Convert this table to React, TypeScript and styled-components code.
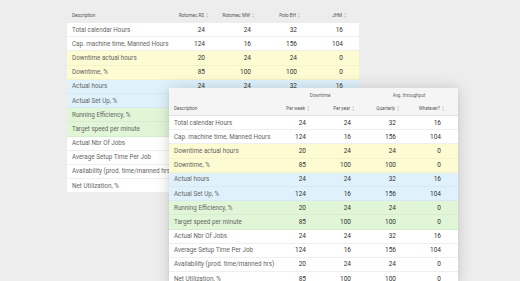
import styled, { createGlobalStyle } from "styled-components";

type Tone = "plain" | "yellow" | "blue" | "green";

const GlobalStyle = createGlobalStyle`
  html, body {
    margin: 0;
    padding: 0;
    background: #ededed;
  }
  body {
    font-family: Roboto, "Liberation Sans", sans-serif;
  }
`;

const toneColors: Record<Tone, string> = {
  plain: "#ffffff",
  yellow: "#fdfbd2",
  blue: "#dff2fb",
  green: "#e0f6d7",
};

const rows: { label: string; values: number[]; tone: Tone }[] = [
  { label: "Total calendar Hours", values: [24, 24, 32, 16], tone: "plain" },
  { label: "Cap. machine time, Manned Hours", values: [124, 16, 156, 104], tone: "plain" },
  { label: "Downtime actual hours", values: [20, 24, 24, 0], tone: "yellow" },
  { label: "Downtime, %", values: [85, 100, 100, 0], tone: "yellow" },
  { label: "Actual hours", values: [24, 24, 32, 16], tone: "blue" },
  { label: "Actual Set Up, %", values: [124, 16, 156, 104], tone: "blue" },
  { label: "Running Efficiency, %", values: [20, 24, 24, 0], tone: "green" },
  { label: "Target speed per minute", values: [85, 100, 100, 0], tone: "green" },
  { label: "Actual Nbr Of Jobs", values: [24, 24, 32, 16], tone: "plain" },
  { label: "Average Setup Time Per Job", values: [124, 16, 156, 104], tone: "plain" },
  { label: "Availability (prod. time/manned hrs)", values: [20, 24, 24, 0], tone: "plain" },
  { label: "Net Utilization, %", values: [85, 100, 100, 0], tone: "plain" },
];

const Page = styled.div`
  position: relative;
  width: 520px;
  height: 281px;
  overflow: hidden;
  background: #ededed;
`;

const BackTable = styled.div`
  width: 292px;
  margin: 8px 0 0 67px;
`;

// the second table sits on top of the first one
const FrontPanel = styled.div`
  position: absolute;
  left: 169px;
  top: 88px;
  width: 289px;
  background: #f5f5f5;
  box-shadow: 0 0 14px rgba(0, 0, 0, 0.16), 0 2px 4px rgba(0, 0, 0, 0.06);
`;

const Row = styled.div<{ $cols: number; $tone?: Tone }>`
  display: grid;
  grid-template-columns: 96px repeat(4, ${(p) => p.$cols}px) 1fr;
  height: 14.2px;
  box-sizing: border-box;
  align-items: center;
  background: ${(p) => (p.$tone ? toneColors[p.$tone] : "transparent")};
  border-bottom: 1px solid
    ${(p) => (p.$tone === "plain" ? "#efefef" : "rgba(0,0,0,0.035)")};
`;

const HeadRow = styled.div<{ $cols: number; $line?: boolean }>`
  display: grid;
  grid-template-columns: 96px repeat(4, ${(p) => p.$cols}px) 1fr;
  height: ${(p) => (p.$line ? 14 : 15)}px;
  box-sizing: border-box;
  align-items: center;
  border-bottom: ${(p) => (p.$line ? "1px solid #e2e2e2" : "none")};
`;

const GroupRow = styled.div`
  display: flex;
  height: 14px;
  align-items: center;
  padding-left: 106px;
`;

const GroupCell = styled.div<{ $w: number }>`
  width: ${(p) => p.$w}px;
  text-align: center;
  font-size: 4.6px;
  color: #666;
`;

const HeadCell = styled.div<{ $num?: boolean }>`
  display: flex;
  align-items: center;
  justify-content: ${(p) => (p.$num ? "flex-end" : "flex-start")};
  gap: 1.5px;
  padding: ${(p) => (p.$num ? "0 1px 0 0" : "0 0 0 5px")};
  font-size: 4.6px;
  color: #555;
  white-space: nowrap;
`;

const LabelCell = styled.div`
  padding-left: 5px;
  font-size: 6.3px;
  color: #666;
  white-space: nowrap;
  min-width: 0;
`;

const NumCell = styled.div`
  padding-right: 4px;
  text-align: right;
  font-size: 6.5px;
  color: #333;
`;

function SortIcon() {
  return (
    <svg width="2.5" height="5" viewBox="0 0 5 10">
      <path d="M2.5 0 L5 3.5 H0 Z M2.5 10 L5 6.5 H0 Z" fill="#c8c8c8" />
    </svg>
  );
}

function Body({ cols }: { cols: number }) {
  return (
    <>
      {rows.map((r) => (
        <Row key={r.label} $cols={cols} $tone={r.tone}>
          <LabelCell>{r.label}</LabelCell>
          {r.values.map((v, i) => (
            <NumCell key={i}>{v}</NumCell>
          ))}
          <div />
        </Row>
      ))}
    </>
  );
}

function Header({ cols, titles, line }: { cols: number; titles: string[]; line?: boolean }) {
  return (
    <HeadRow $cols={cols} $line={line}>
      <HeadCell>Description</HeadCell>
      {titles.map((t) => (
        <HeadCell key={t} $num>
          {t}
          <SortIcon />
        </HeadCell>
      ))}
      <div />
    </HeadRow>
  );
}

export default function App() {
  return (
    <Page>
      <GlobalStyle />
      <BackTable>
        <Header cols={46} titles={["Rotomec RS", "Rotomec MW", "Poto BH", "JHM"]} />
        <Body cols={46} />
      </BackTable>
      <FrontPanel>
        <GroupRow>
          <GroupCell $w={90}>Downtime</GroupCell>
          <GroupCell $w={88}>Avg. throughput</GroupCell>
        </GroupRow>
        <Header cols={45} titles={["Per week", "Per year", "Quarterly", "Whatever?"]} line />
        <Body cols={45} />
      </FrontPanel>
    </Page>
  );
}
